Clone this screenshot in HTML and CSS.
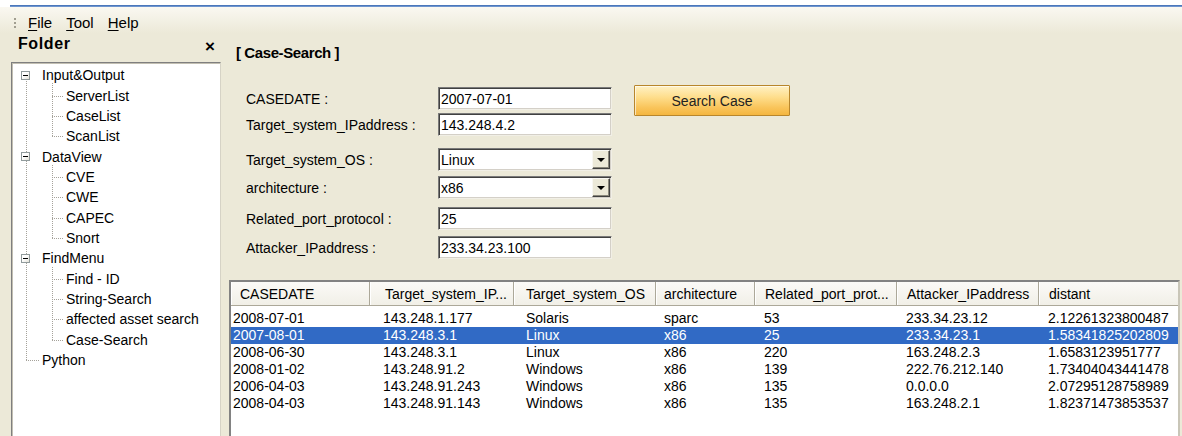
FILE: index.html
```html
<!DOCTYPE html>
<html lang="en">
<head>
<meta charset="utf-8">
<title>Case-Search</title>
<link rel="stylesheet" href="styles.css">
</head>
<body>
<div class="topline"></div>
<nav class="menubar">
  <span class="grip"><i></i><i></i><i></i></span>
  <span class="menu"><u>F</u>ile</span>
  <span class="menu"><u>T</u>ool</span>
  <span class="menu"><u>H</u>elp</span>
</nav>
<div class="workspace">
  <aside class="dock">
    <div class="dock-head">
      <span class="dock-title">Folder</span>
      <span class="dock-close">×</span>
    </div>
    <div class="tree-box">
      <ul class="tree">
        <li class="root">
          <div class="row"><span class="toggle"></span>Input&amp;Output</div>
          <ul class="children">
            <li class="row">ServerList</li>
            <li class="row">CaseList</li>
            <li class="row">ScanList</li>
          </ul>
        </li>
        <li class="root">
          <div class="row"><span class="toggle"></span>DataView</div>
          <ul class="children">
            <li class="row">CVE</li>
            <li class="row">CWE</li>
            <li class="row">CAPEC</li>
            <li class="row">Snort</li>
          </ul>
        </li>
        <li class="root">
          <div class="row"><span class="toggle"></span>FindMenu</div>
          <ul class="children">
            <li class="row">Find - ID</li>
            <li class="row">String-Search</li>
            <li class="row">affected asset search</li>
            <li class="row">Case-Search</li>
          </ul>
        </li>
        <li class="root leaf">
          <div class="row">Python</div>
        </li>
      </ul>
    </div>
  </aside>

  <main class="main">
    <h1 class="page-title">[ Case-Search ]</h1>

    <div class="search-area">
      <div class="case-form">
        <label class="field-label">CASEDATE :</label>
        <input class="field" type="text" value="2007-07-01" readonly>

        <label class="field-label">Target_system_IPaddress :</label>
        <input class="field" type="text" value="143.248.4.2" readonly>

        <label class="field-label">Target_system_OS :</label>
        <div class="field combo"><span class="combo-value">Linux</span><span class="combo-btn"></span></div>

        <label class="field-label">architecture :</label>
        <div class="field combo"><span class="combo-value">x86</span><span class="combo-btn"></span></div>

        <label class="field-label">Related_port_protocol :</label>
        <input class="field" type="text" value="25" readonly>

        <label class="field-label">Attacker_IPaddress :</label>
        <input class="field" type="text" value="233.34.23.100" readonly>
      </div>
      <button class="search-btn" type="button">Search Case</button>
    </div>

    <div class="listview">
      <div class="lv-head">
        <span>CASEDATE</span>
        <span>Target_system_IP...</span>
        <span>Target_system_OS</span>
        <span>architecture</span>
        <span>Related_port_prot...</span>
        <span>Attacker_IPaddress</span>
        <span>distant</span>
      </div>
      <div class="lv-body">
        <div class="lv-row">
          <span>2008-07-01</span><span>143.248.1.177</span><span>Solaris</span><span>sparc</span><span>53</span><span>233.34.23.12</span><span>2.12261323800487</span>
        </div>
        <div class="lv-row selected">
          <span>2007-08-01</span><span>143.248.3.1</span><span>Linux</span><span>x86</span><span>25</span><span>233.34.23.1</span><span>1.58341825202809</span>
        </div>
        <div class="lv-row">
          <span>2008-06-30</span><span>143.248.3.1</span><span>Linux</span><span>x86</span><span>220</span><span>163.248.2.3</span><span>1.6583123951777</span>
        </div>
        <div class="lv-row">
          <span>2008-01-02</span><span>143.248.91.2</span><span>Windows</span><span>x86</span><span>139</span><span>222.76.212.140</span><span>1.73404043441478</span>
        </div>
        <div class="lv-row">
          <span>2006-04-03</span><span>143.248.91.243</span><span>Windows</span><span>x86</span><span>135</span><span>0.0.0.0</span><span>2.07295128758989</span>
        </div>
        <div class="lv-row">
          <span>2008-04-03</span><span>143.248.91.143</span><span>Windows</span><span>x86</span><span>135</span><span>163.248.2.1</span><span>1.82371473853537</span>
        </div>
      </div>
    </div>
  </main>
</div>
</body>
</html>
```

FILE: styles.css
```css
* {
  box-sizing: border-box;
}

html,
body {
  margin: 0;
  padding: 0;
  overflow: hidden;
}

body {
  width: 1182px;
  height: 436px;
  background: #ece9d8;
  font-family: "Liberation Sans", Arial, sans-serif;
  font-size: 14px;
  color: #000;
}

/* window edge: white strip with the blue frame line */
.topline {
  height: 7px;
  background:
    linear-gradient(#3a68b0, #7fa3d9) 10px 5px / calc(100% - 10px) 2px no-repeat,
    #fff;
}

/* ---------- menu bar ---------- */
.menubar {
  display: flex;
  align-items: center;
  height: 26px;
  padding: 5px 0 0 14px;
  font-size: 15px;
  background: linear-gradient(#faf8f1, #ece9d8);
}

.grip {
  display: flex;
  flex-direction: column;
  gap: 2px;
  margin-right: 6px;
}

.grip i {
  width: 2px;
  height: 2px;
  background: #a19e90;
}

.menu {
  padding: 0 6px;
  margin-right: 2px;
}

.menu u {
  text-decoration-thickness: 1px;
  text-underline-offset: 2px;
}

/* ---------- workspace ---------- */
.workspace {
  display: flex;
  height: 410px;
}

/* ---------- folder dock ---------- */
.dock {
  width: 229px;
  flex: none;
  display: flex;
  flex-direction: column;
  padding: 0 8px 0 11px;
}

.dock-head {
  height: 29px;
  display: flex;
  justify-content: space-between;
  align-items: flex-start;
}

.dock-title {
  padding-left: 7px;
  font-size: 16px;
  font-weight: bold;
  line-height: 21px;
  letter-spacing: 0.6px;
}

.dock-close {
  margin: 5px 6px 0 0;
  font-size: 17px;
  font-weight: bold;
  line-height: 17px;
}

.tree-box {
  flex: 1;
  padding: 1px;
  background: #fff;
  border: 1px solid;
  border-color: #7f7f7f #d6d3c6 #d6d3c6 #7f7f7f;
  box-shadow: inset 1px 1px #c2bfb2;
}

.tree,
.tree ul {
  list-style: none;
  margin: 0;
  padding: 0;
}

.tree {
  position: relative;
  padding-top: 1px;
}

/* dotted line joining the root nodes */
.tree::before {
  content: "";
  position: absolute;
  left: 13px;
  top: 11px;
  bottom: 10px;
  border-left: 1px dotted #a5a29a;
}

.row {
  position: relative;
  display: flex;
  align-items: center;
  height: 20.36px;
  white-space: nowrap;
}

.root > .row {
  padding-left: 8px;
}

.root.leaf > .row {
  padding-left: 29px;
}

.root.leaf > .row::before {
  content: "";
  position: absolute;
  left: 13px;
  top: 50%;
  width: 13px;
  border-top: 1px dotted #a5a29a;
}

.toggle {
  position: relative;
  z-index: 1;
  flex: none;
  width: 9px;
  height: 9px;
  margin-right: 12px;
  border: 1px solid #919b9c;
  background: linear-gradient(135deg, #fff 40%, #e4e2d8);
}

.toggle::after {
  content: "";
  position: absolute;
  left: 1px;
  top: 3px;
  width: 5px;
  height: 1px;
  background: #000;
}

.children {
  position: relative;
}

.children::before {
  content: "";
  position: absolute;
  left: 39px;
  top: -2px;
  bottom: 10px;
  border-left: 1px dotted #a5a29a;
}

.children > .row {
  padding-left: 53px;
}

.children > .row::before {
  content: "";
  position: absolute;
  left: 39px;
  top: 50%;
  width: 11px;
  border-top: 1px dotted #a5a29a;
}

/* ---------- main panel ---------- */
.main {
  flex: 1;
  min-width: 0;
  display: flex;
  flex-direction: column;
}

.page-title {
  margin: 10px 0 0 7px;
  font-size: 15px;
  font-weight: bold;
  line-height: 20px;
  letter-spacing: -0.4px;
}

.search-area {
  display: flex;
  align-items: flex-start;
  margin: 24px 0 0 17px;
}

.case-form {
  display: grid;
  grid-template-columns: 192px 174px;
  grid-template-rows: 26px 35px 28px 31px 29px 23px;
}

.field-label {
  display: flex;
  align-items: center;
  height: 23px;
  white-space: nowrap;
}

.field {
  display: flex;
  align-items: center;
  width: 174px;
  height: 23px;
  margin: 0;
  padding: 0 0 0 2px;
  background: #fff;
  border: 1px solid;
  border-color: #7a7a7a #f1efe6 #f1efe6 #7a7a7a;
  box-shadow: inset 1px 1px #404040, inset -1px -1px #d4d0c8;
  font: inherit;
  color: #000;
  outline: none;
}

.combo {
  padding: 1px 1px 1px 2px;
}

.combo-value {
  flex: 1;
}

.combo-btn {
  position: relative;
  width: 18px;
  height: 19px;
  background: #ece9d8;
  border: 1px solid;
  border-color: #f8f7f2 #404040 #404040 #f8f7f2;
  box-shadow: inset -1px -1px #8a877b;
}

.combo-btn::after {
  content: "";
  position: absolute;
  left: 4px;
  top: 7px;
  border-style: solid;
  border-width: 4px 4px 0;
  border-color: #000 transparent transparent;
}

.search-btn {
  width: 156px;
  height: 31px;
  margin: -2px 0 0 22px;
  padding: 0;
  border: 1px solid #b8862c;
  border-radius: 1px;
  background: linear-gradient(#fff1c4, #fedd8a 40%, #f9c45a 75%, #f4b640);
  box-shadow: inset 1px 1px rgba(255, 255, 255, 0.6);
  font: inherit;
  color: #222;
}

/* ---------- result list ---------- */
.listview {
  flex: 1;
  margin: 21px 2px 0 0;
  background: #fff;
  border: 2px solid;
  border-color: #828282 #c9c6b8 #c9c6b8 #828282;
}

.lv-head,
.lv-row {
  display: grid;
  grid-template-columns: 139px 144px 142px 99px 142px 142px 139px;
}

.lv-head {
  height: 24px;
  background: linear-gradient(#fbfaf7, #f1efe7);
  border-bottom: 1px solid #aca899;
}

.lv-head span {
  display: flex;
  align-items: center;
  padding-left: 10px;
  border-right: 1px solid #aca899;
  box-shadow: inset 1px 0 #fff;
  white-space: nowrap;
  overflow: hidden;
}

.lv-head span:nth-child(1) { padding-left: 9px; }
.lv-head span:nth-child(2) { padding-left: 15px; }
.lv-head span:nth-child(3) { padding-left: 12px; }
.lv-head span:nth-child(4) { padding-left: 8px; }
.lv-head span:last-child { border-right: 0; }

.lv-body {
  padding-top: 4px;
}

.lv-row {
  height: 17px;
  line-height: 17px;
}

.lv-row span {
  padding-left: 9px;
  white-space: nowrap;
  overflow: hidden;
}

.lv-row span:nth-child(1) { padding-left: 2px; }
.lv-row span:nth-child(2) { padding-left: 13px; }
.lv-row span:nth-child(3) { padding-left: 12px; }
.lv-row span:nth-child(4) { padding-left: 8px; }

.lv-row.selected {
  background: #316ac5;
  color: #fff;
}
```
